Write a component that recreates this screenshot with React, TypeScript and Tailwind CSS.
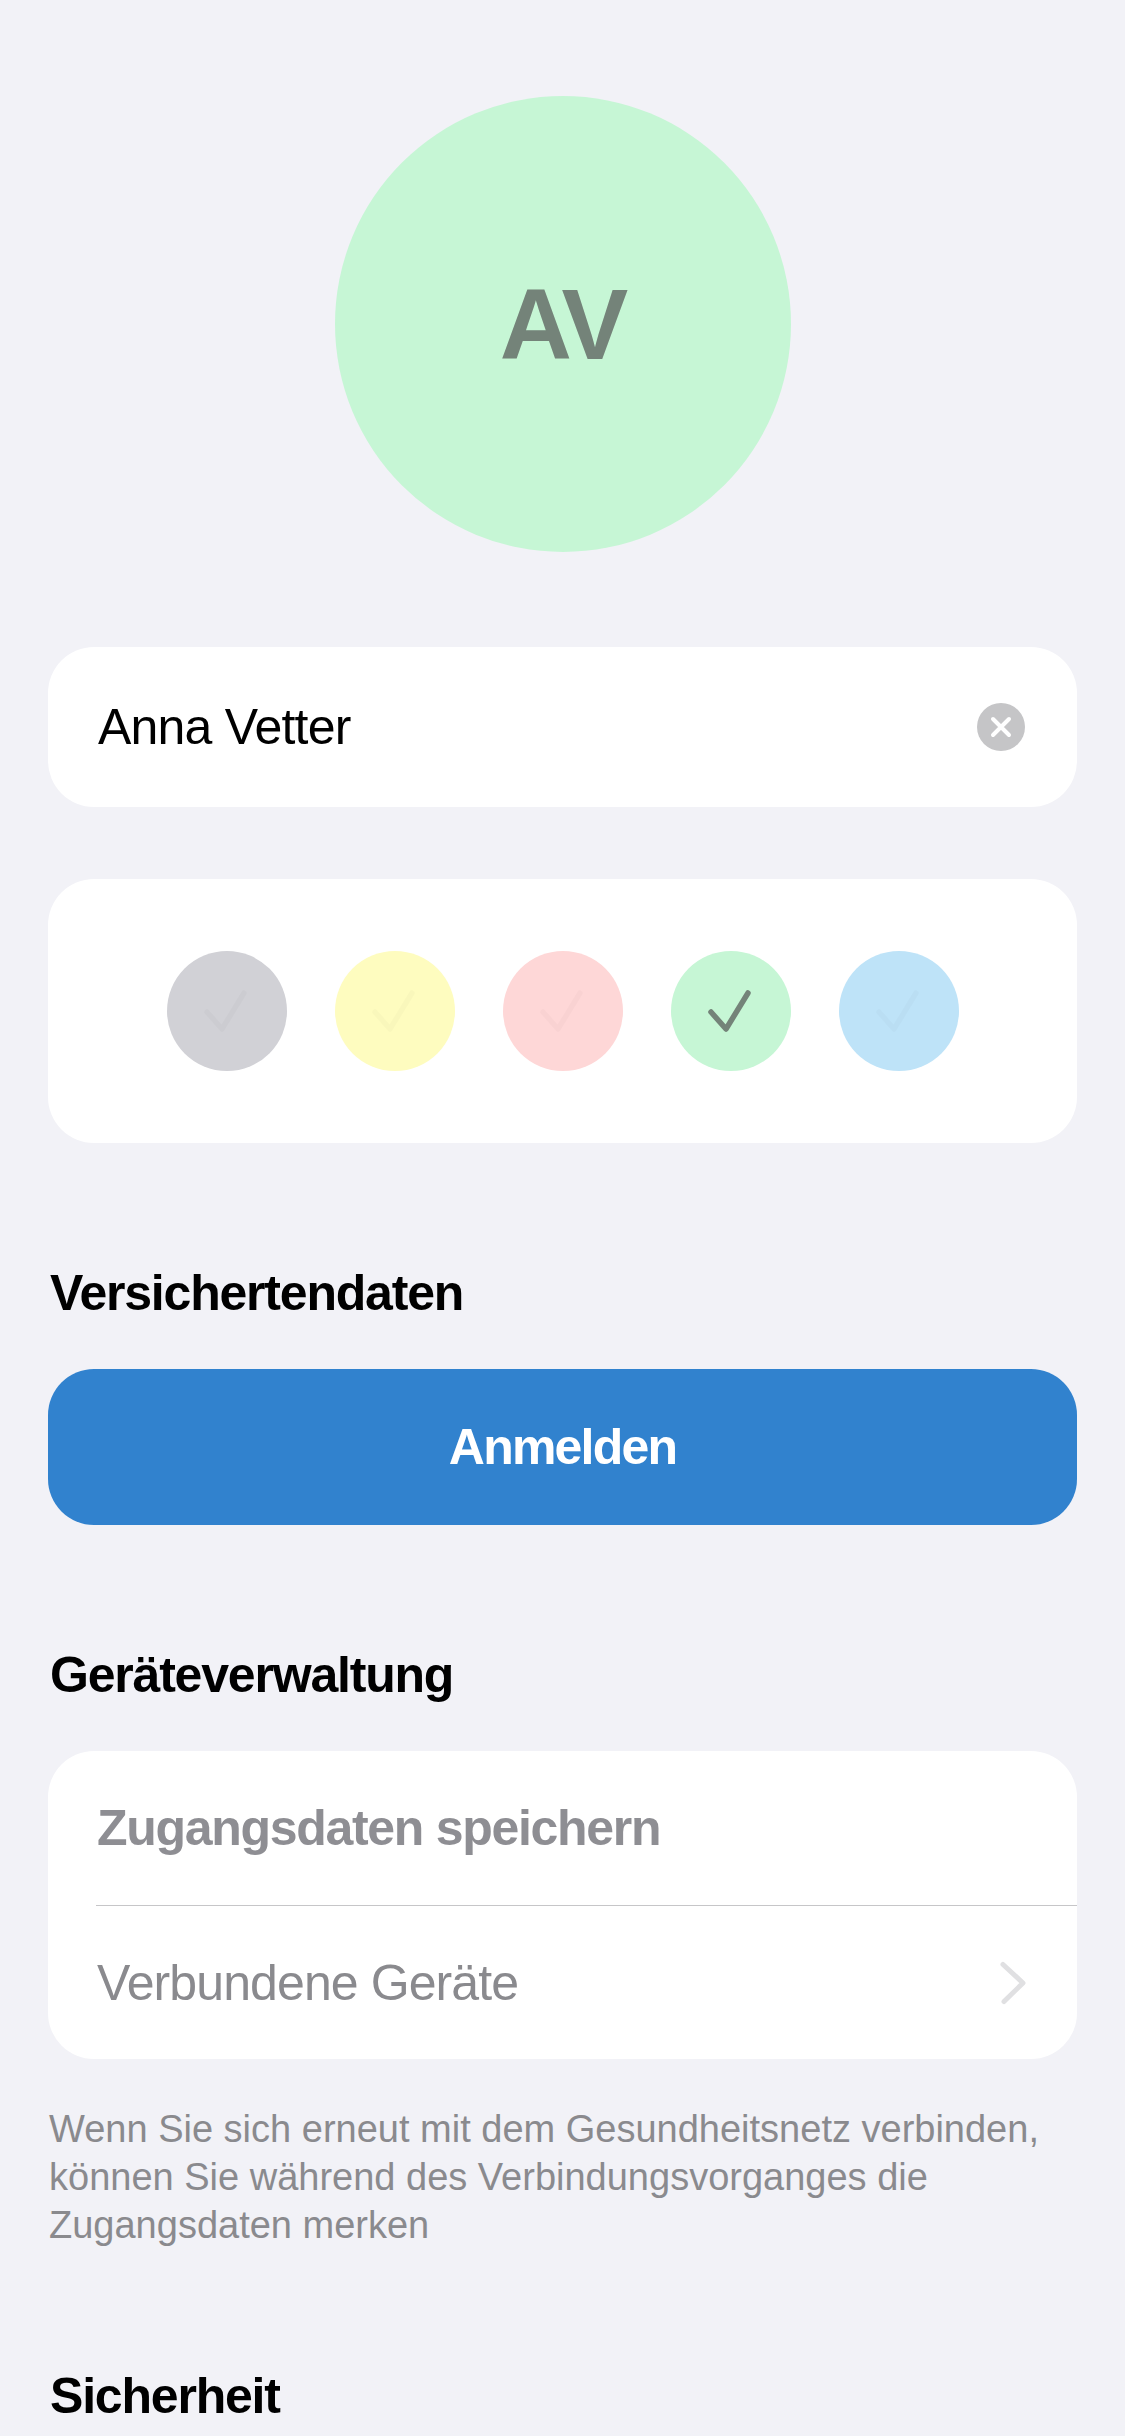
import React from "react";

const swatches = [
  { bg: "bg-[#d1d1d6]", selected: false },
  { bg: "bg-[#fefcbf]", selected: false },
  { bg: "bg-[#fed7d7]", selected: false },
  { bg: "bg-[#c6f6d5]", selected: true },
  { bg: "bg-[#bee3f8]", selected: false },
];

function Check({ selected }: { selected: boolean }) {
  return (
    <svg width="120" height="120" viewBox="0 0 120 120" fill="none">
      <path
        d="M40 61 L55 78 L77 42"
        stroke={selected ? "#748379" : "rgba(0,0,0,0.02)"}
        strokeWidth="5.5"
        strokeLinecap="round"
        strokeLinejoin="round"
      />
    </svg>
  );
}

export default function App() {
  return (
    <div className="min-h-[2436px] w-full bg-[#f2f2f7] font-['Liberation_Sans',Arial,sans-serif] px-[48px] overflow-hidden">
      {/* Avatar */}
      <div className="flex justify-center pt-[96px]">
        <div className="flex h-[456px] w-[456px] items-center justify-center rounded-full bg-[#c6f6d5]">
          <span className="text-[100px] font-bold leading-none tracking-[-3px] text-[#748379]">AV</span>
        </div>
      </div>

      {/* Name field */}
      <div className="mt-[95px] flex h-[160px] items-center justify-between rounded-[46px] bg-white pl-[50px] pr-[52px]">
        <span className="text-[50px] leading-none tracking-[-0.8px] text-black">Anna Vetter</span>
        <div className="flex h-[48px] w-[48px] items-center justify-center rounded-full bg-[#c5c5c7]">
          <svg width="22" height="22" viewBox="0 0 22 22" fill="none">
            <path d="M3 3 L19 19 M19 3 L3 19" stroke="white" strokeWidth="4" strokeLinecap="round" />
          </svg>
        </div>
      </div>

      {/* Color picker */}
      <div className="mt-[72px] flex h-[264px] items-center justify-center gap-[48px] rounded-[46px] bg-white">
        {swatches.map((s, i) => (
          <div key={i} className={`h-[120px] w-[120px] rounded-full ${s.bg}`}>
            <Check selected={s.selected} />
          </div>
        ))}
      </div>

      {/* Versichertendaten */}
      <h2 className="mt-[120px] pl-[2px] text-[50px] font-bold leading-[60px] tracking-[-1.2px] text-black">
        Versichertendaten
      </h2>
      <button className="mt-[46px] flex h-[156px] w-full items-center justify-center rounded-[46px] bg-[#3182ce]">
        <span className="text-[50px] font-bold leading-none tracking-[-1.8px] text-white">Anmelden</span>
      </button>

      {/* Geräteverwaltung */}
      <h2 className="mt-[120px] pl-[2px] text-[50px] font-bold leading-[60px] tracking-[-1.2px] text-black">
        Geräteverwaltung
      </h2>
      <div className="mt-[46px] overflow-hidden rounded-[46px] bg-white">
        <div className="flex h-[154px] items-center pl-[49px]">
          <span className="text-[50px] font-bold leading-none tracking-[-1.3px] text-[#8e8e93]">
            Zugangsdaten speichern
          </span>
        </div>
        <div className="ml-[48px] h-px bg-[#c6c6c8]" />
        <div className="flex h-[153px] items-center justify-between pl-[49px] pr-[50px]">
          <span className="text-[50px] leading-none tracking-[-0.9px] text-[#8a8a8e]">Verbundene Geräte</span>
          <svg width="28" height="44" viewBox="0 0 28 44" fill="none">
            <path d="M4 3.5 L24 22 L5 40.5" stroke="#e0e0e2" strokeWidth="5" strokeLinecap="round" strokeLinejoin="round" />
          </svg>
        </div>
      </div>
      <p className="mt-[46px] pl-[1px] pr-[20px] text-[38px] leading-[48px] text-[#8a8a8e]">
        Wenn Sie sich erneut mit dem Gesundheitsnetz verbinden, können Sie während des Verbindungsvorganges die
        Zugangsdaten merken
      </p>

      {/* Sicherheit */}
      <h2 className="mt-[117px] pl-[2px] text-[50px] font-bold leading-[60px] tracking-[-1.2px] text-black">
        Sicherheit
      </h2>
    </div>
  );
}
